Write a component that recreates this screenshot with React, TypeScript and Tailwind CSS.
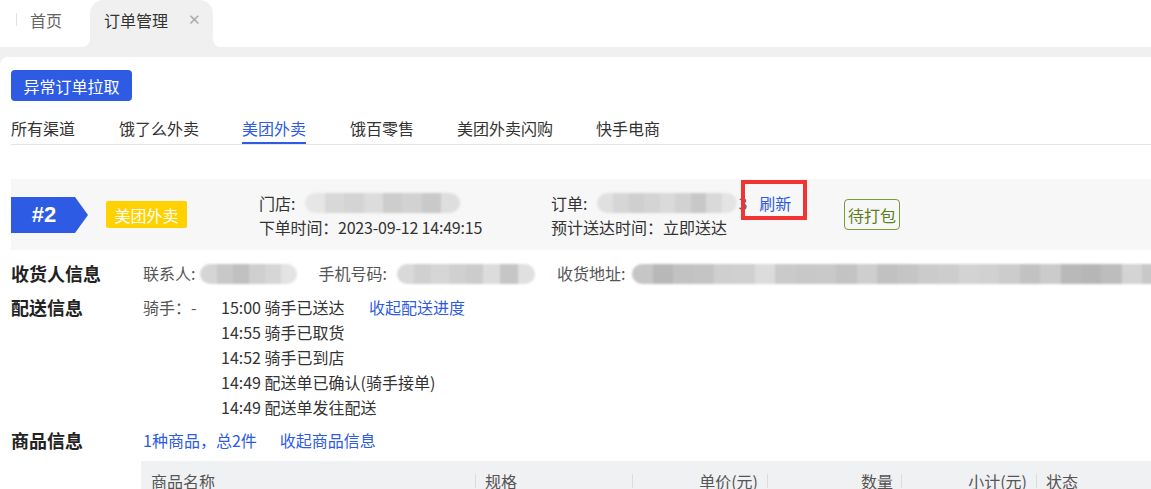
import React from "react";

const FONT = "font-['Noto_Sans_CJK_SC','Noto_Sans',sans-serif]";

function Blur({ w, colors }: { w: string; colors: string[] }) {
  return (
    <div className={`flex h-[20px] shrink-0 overflow-hidden rounded-full blur-[1px] ${w}`}>
      {colors.map((c, i) => (
        <div key={i} className="h-full flex-1" style={{ backgroundColor: c }} />
      ))}
    </div>
  );
}

const g1 = ["#e6e6e6", "#d8d8d8", "#d4d4d4", "#dcdcdc", "#cdcdcd", "#d2d2d2", "#c9c9c9", "#dedede"];
const g2 = ["#d5d5d5", "#c8c8c8", "#c0c0c0", "#cfcfcf", "#d6d6d6", "#e3e3e3"];
const g3 = ["#d9d9d9", "#d0d0d0", "#d6d6d6", "#d0d0d0", "#cccccc", "#dcdcdc", "#c6c6c6", "#e0e0e0"];
const g4 = [
  "#c6c6c6", "#b8b8b8", "#c2c2c2", "#c4c4c4", "#cfcfcf", "#d0d0d0", "#dcdcdc", "#cacaca", "#c8c8c8", "#c9c9c9",
  "#c3c3c3", "#cecece", "#c1c1c1", "#c5c5c5", "#cbcbcb", "#cdcdcd", "#d3d3d3", "#d1d1d1", "#cccccc", "#c2c2c2",
  "#cbcbcb", "#b9b9b9", "#b6b6b6", "#bdbdbd", "#d4d4d4", "#c8c8c8",
];
const g5 = ["#e0e0e0", "#d6d6d6", "#cfcfcf", "#d4d4d4", "#dadada", "#d2d2d2", "#c8c8c8", "#d9d9d9", "#e4e4e4"];

export default function App() {
  const channels = ["所有渠道", "饿了么外卖", "美团外卖", "饿百零售", "美团外卖闪购", "快手电商"];
  const timeline = [
    "15:00 骑手已送达",
    "14:55 骑手已取货",
    "14:52 骑手已到店",
    "14:49 配送单已确认(骑手接单)",
    "14:49 配送单发往配送",
  ];
  return (
    <div className={`w-[1151px] h-[489px] overflow-hidden whitespace-nowrap bg-white text-[16px] text-[#333] ${FONT}`}>
      {/* top tab bar */}
      <div className="flex h-[47px] items-stretch bg-white">
        <div className="flex items-center pb-[8px] pl-[16px]">
          <div className="h-[13px] w-px bg-[#e2e2e2]" />
          <span className="ml-[13px] text-[#666]">首页</span>
        </div>
        <div className="relative ml-[28px] flex w-[123px] items-center rounded-t-[14px] bg-[#f0f0f0] pb-[8px] pl-[14px]">
          <span className="text-[#333]">订单管理</span>
          <span className="ml-[20px] text-[15px] text-[#aaa]">✕</span>
          <div className="absolute bottom-0 left-[-8px] h-[8px] w-[8px] bg-[#f0f0f0]">
            <div className="h-full w-full rounded-br-[8px] bg-white" />
          </div>
          <div className="absolute bottom-0 right-[-8px] h-[8px] w-[8px] bg-[#f0f0f0]">
            <div className="h-full w-full rounded-bl-[8px] bg-white" />
          </div>
        </div>
      </div>

      <div className="bg-[#f0f0f0] pt-[10px]">
        <div className="h-[432px] rounded-tl-[8px] bg-white pl-[11px] pt-[13px]">
          <button className="flex h-[31px] w-[121px] items-center justify-center rounded-[4px] bg-[#2d5be3] text-[16px] text-white">
            异常订单拉取
          </button>

          {/* channels */}
          <div className="mt-[11px] flex h-[33px] items-stretch border-b border-[#e3e3e3]">
            {channels.map((c, i) => (
              <div
                key={c}
                className={`flex items-center ${
                  i === 2 ? "border-b-2 border-[#2d5be3] text-[#2d5be3]" : "text-[#333]"
                } ${["mr-[44px]", "mr-[43px]", "mr-[44px]", "mr-[43px]", "mr-[43px]", ""][i]}`}
              >
                <span className={i === 2 ? "mt-[2px]" : ""}>{c}</span>
              </div>
            ))}
          </div>

          {/* order header card */}
          <div className="mt-[34px] flex h-[71px] items-center bg-[#f7f7f7]">
            <div className="flex h-[36px] items-stretch">
              <div className="flex w-[64px] items-center justify-center bg-[#2d5be3] pl-[2px] font-['Liberation_Sans',sans-serif] text-[22px] font-bold text-white">
                #2
              </div>
              <svg width="14" height="36" viewBox="0 0 14 36" className="block">
                <polygon points="0,0 13,18 0,36" fill="#2d5be3" />
              </svg>
            </div>
            <div className="ml-[17px] flex h-[27px] w-[81px] items-center justify-center rounded-[2px] bg-[#ffd100] text-white">
              美团外卖
            </div>
            <div className="ml-[72px] flex w-[292px] flex-col leading-[24px]">
              <div className="flex items-center">
                <span>门店:</span>
                <div className="ml-[10px]">
                  <Blur w="w-[155px]" colors={g1} />
                </div>
              </div>
              <div className="tracking-[-0.2px]">下单时间：2023-09-12 14:49:15</div>
            </div>
            <div className="flex w-[293px] flex-col leading-[24px]">
              <div className="flex items-center">
                <span>订单:</span>
                <div className="ml-[10px]">
                  <Blur w="w-[140px]" colors={g5} />
                </div>
                <span className="ml-[1px] text-[#666]">3</span>
                <span className="relative ml-[12px] text-[#2d5be3]">
                  刷新
                  <span className="absolute -bottom-[5px] -left-[18px] -right-[16px] -top-[11px] border-[4px] border-[#f23333]" />
                </span>
              </div>
              <div>预计送达时间：立即送达</div>
            </div>
            <div className="flex h-[31px] items-center rounded-[4px] border border-[#7b9a3c] px-[3px] text-[#5e7e1c]">
              待打包
            </div>
          </div>

          {/* info rows */}
          <div className="mt-[11px] flex leading-[25px]">
            <div className="w-[132px] shrink-0 text-[18px] font-bold text-[#222]">收货人信息</div>
            <div className="flex items-center text-[#555]">
              <span>联系人:</span>
              <div className="ml-[5px]">
                <Blur w="w-[97px]" colors={g2} />
              </div>
              <span className="ml-[21px]">手机号码:</span>
              <div className="ml-[10px]">
                <Blur w="w-[138px]" colors={g3} />
              </div>
              <span className="ml-[22px]">收货地址:</span>
              <div className="ml-[7px]">
                <Blur w="w-[530px]" colors={g4} />
              </div>
            </div>
          </div>

          <div className="mt-[9px] flex leading-[25px]">
            <div className="w-[132px] shrink-0 text-[18px] font-bold text-[#222]">配送信息</div>
            <div className="w-[78px] shrink-0 text-[#555]">骑手：-</div>
            <div className="flex flex-col">
              {timeline.map((t, i) => (
                <div key={i} className="flex">
                  <span className={i === 0 ? "w-[148px]" : ""}>{t}</span>
                  {i === 0 && <span className="text-[#2d5be3]">收起配送进度</span>}
                </div>
              ))}
            </div>
          </div>

          <div className="mt-[8px] flex leading-[25px]">
            <div className="w-[132px] shrink-0 text-[18px] font-bold text-[#222]">商品信息</div>
            <span className="text-[#2d5be3]">1种商品，总2件</span>
            <span className="ml-[23px] text-[#2d5be3]">收起商品信息</span>
          </div>

          {/* table header */}
          <div className="ml-[130px] mt-[8px] flex h-[40px] items-center bg-[#f0f1f3] text-[#555]">
            <div className="flex w-[335px] items-center justify-between pl-[10px]">
              <span>商品名称</span>
              <div className="h-[14px] w-px bg-[#dcdcdc]" />
            </div>
            <div className="flex w-[157px] items-center justify-between pl-[9px]">
              <span>规格</span>
              <div className="h-[14px] w-px bg-[#dcdcdc]" />
            </div>
            <div className="flex w-[135px] items-center justify-end gap-[9px]">
              <span>单价(元)</span>
              <div className="h-[14px] w-px bg-[#dcdcdc]" />
            </div>
            <div className="flex w-[134px] items-center justify-end gap-[8px]">
              <span>数量</span>
              <div className="h-[14px] w-px bg-[#dcdcdc]" />
            </div>
            <div className="flex w-[135px] items-center justify-end gap-[9px]">
              <span>小计(元)</span>
              <div className="h-[14px] w-px bg-[#dcdcdc]" />
            </div>
            <div className="pl-[9px]">状态</div>
          </div>
        </div>
      </div>
    </div>
  );
}
